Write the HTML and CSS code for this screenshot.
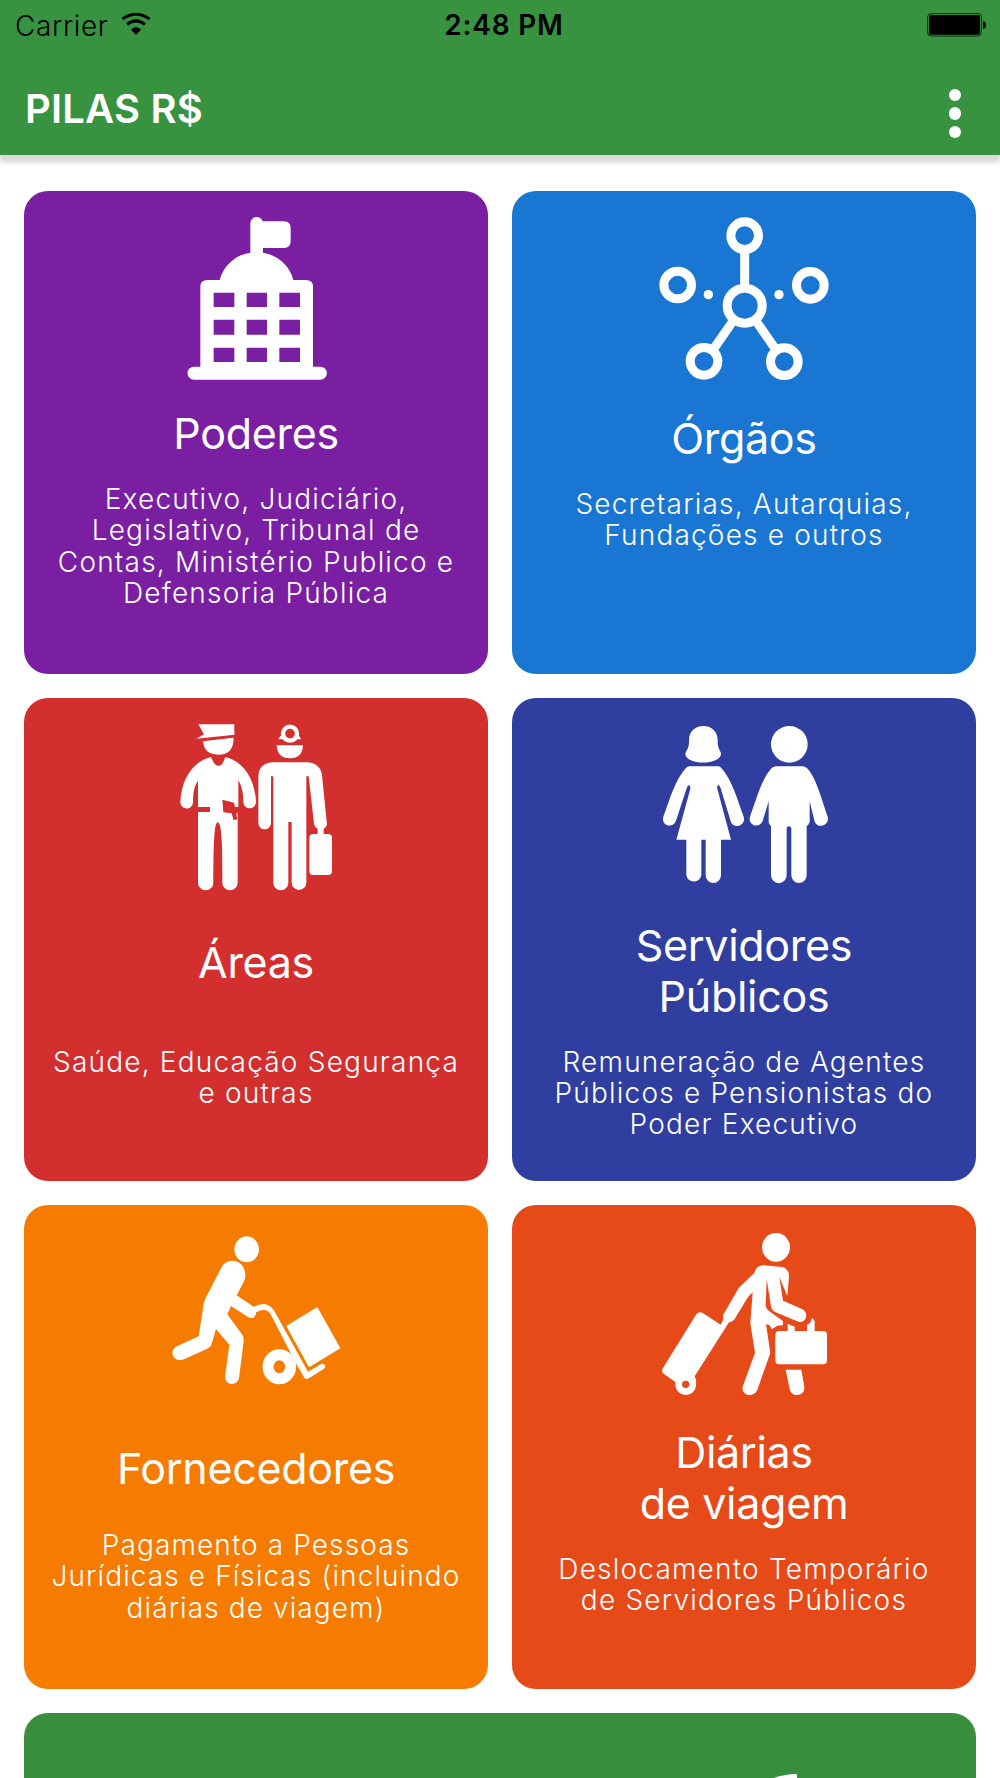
FILE: index.html
```html
<!DOCTYPE html>
<html lang="pt-BR">
<head>
  <meta charset="UTF-8">
  <meta name="viewport" content="width=device-width, initial-scale=1.0">
  <title>PILAS R$</title>
  <link rel="stylesheet" href="styles.css">
</head>
<body>
  <header class="header">
    <div class="status-bar">
      <div class="carrier">
        <span>Carrier</span>
        <svg class="wifi" viewBox="0 0 90 66">
          <path d="M4 18 Q45 -11 86 18" fill="none" stroke="#000" stroke-width="9"/>
          <path d="M18 34 Q45 13 72 34" fill="none" stroke="#000" stroke-width="9"/>
          <path d="M30 50 Q45 36 60 50 L45 65 Z"/>
        </svg>
      </div>
      <span class="time">2:48 PM</span>
      <svg class="battery" viewBox="0 0 180 72">
        <rect x="2" y="2" width="161" height="67" rx="10" fill="none" stroke="#0b3010" stroke-width="3"/>
        <rect x="6" y="6" width="153" height="59" rx="6"/>
        <path d="M168 24 Q177 26 177 36 Q177 46 168 48 Z"/>
      </svg>
    </div>
    <div class="toolbar">
      <h1>PILAS R$</h1>
      <button class="menu" aria-label="Menu"><i></i><i></i><i></i></button>
    </div>
  </header>

  <main class="grid">
    <a class="card poderes">
      <svg class="icon" viewBox="-57 0 630 600">
        <path fill-rule="evenodd" d="M241 71 A19 19 0 0 1 278 64 H342 Q362 64 362 84 V124 Q362 144 342 144 H279 V158 A112 112 0 0 1 370 240 H408 Q429 240 429 260 V500 H451 A19 19 0 0 1 451 539 H72 A19 19 0 0 1 72 500 H91 V260 Q91 240 112 240 H149 A112 112 0 0 1 241 158 Z
          M131 278 V321 H193 V278 Z M230 278 V321 H291 V278 Z M328 278 V321 H390 V278 Z
          M131 359 V404 H193 V359 Z M230 359 V404 H291 V359 Z M328 359 V404 H390 V359 Z
          M131 443 V486 H193 V443 Z M230 443 V486 H291 V443 Z M328 443 V486 H390 V443 Z"/>
      </svg>
      <h2>Poderes</h2>
      <p>Executivo, Judiciário,<br>Legislativo, Tribunal de<br>Contas, Ministério Publico e<br>Defensoria Pública</p>
    </a>

    <a class="card orgaos">
      <svg class="icon" viewBox="-3 0 630 600">
        <g fill="none" stroke="#fff" stroke-width="27">
          <circle cx="314" cy="107" r="41.5"/>
          <circle cx="113" cy="255" r="41.5"/>
          <circle cx="511" cy="256" r="41.5"/>
          <circle cx="192" cy="484" r="41.5"/>
          <circle cx="433" cy="485" r="41.5"/>
          <circle cx="314" cy="317" r="52.5"/>
          <path d="M314 155 V260 M277 366 L224 442 M350 366 L403 442"/>
        </g>
        <circle cx="205" cy="284" r="14"/>
        <circle cx="417" cy="284" r="14"/>
      </svg>
      <h2>Órgãos</h2>
      <p>Secretarias, Autarquias,<br>Fundações e outros</p>
    </a>

    <a class="card areas">
      <svg class="icon" viewBox="-27 21 630 600">
        <!-- policial -->
        <path d="M115 73 H223 V104 L109 116 L132 103 Z"/>
        <path d="M129 124 L221 113 Q221 164 175 164 Q132 164 129 124 Z"/>
        <path d="M153 171 C160 187 165 197 175 197 C186 197 190 187 196 171 C250 184 284 235 288 305 A19 19 0 0 1 250 307 C250 280 246 259 235 240 V321 H225 L222 308 L187 299 L190 337 L215 340 L221 361 L232 358 L229 343 L233 337 V548 A23 23 0 0 1 187 548 C187 470 188 367 173 367 C160 367 161 470 160 548 A23 23 0 0 1 114 548 V336 H150 V321 H114 V243 C102 259 99 280 99 308 A19 19 0 0 1 61 305 C65 235 99 184 153 171 Z"/>
        <!-- médico -->
        <circle cx="390" cy="101" r="21" fill="none" stroke="#fff" stroke-width="13"/>
        <path d="M363 106 L355 118 H372 Z M416 106 L424 118 H407 Z"/>
        <path d="M350 136 H429 Q427 175 390 175 Q352 175 350 136 Z"/>
        <path d="M338 187 H442 C470 188 485 207 486 226 L501 374 Q500 380 491 386 V402 H504 Q516 402 516 414 V513 Q516 525 504 525 H460 Q448 525 448 513 V414 Q448 402 460 402 H473 V386 Q463 380 462 371 L446 229 H439 V548 A22 22 0 0 1 395 548 V366 H385 V548 A22 22 0 0 1 340 548 V229 H333 V369 A19 19 0 0 1 295 369 V230 Q296 190 338 187 Z"/>
      </svg>
      <h2>Áreas</h2>
      <p>Saúde, Educação Segurança<br>e outras</p>
    </a>

    <a class="card servidores">
      <svg class="icon" viewBox="-3 21 630 600">
        <path d="M147 120 C147 64 233 64 233 120 C232 142 238 147 243 160 C246 197 133 197 136 160 C142 147 148 142 147 120 Z"/>
        <path d="M148 199 H234 Q240 199 246 206 C275 240 290 290 311 350 C319 374 284 390 273 367 L242 265 Q239 254 234 256 Q230 258 232 266 L273 419 H243 V526 A23 23 0 0 1 197 526 V419 H184 V526 A23 23 0 0 1 139 526 V419 H109 L151 266 Q152 258 148 256 Q143 254 140 265 L108 362 C98 388 62 376 70 350 C92 290 106 240 136 206 Q142 199 148 199 Z"/>
        <circle cx="448" cy="133" r="55"/>
        <path d="M408 199 H488 Q500 200 509 214 C532 247 543 293 563 350 C570 374 536 390 524 365 L509 304 V366 Q505 377 500 378 V526 A23 23 0 0 1 454 526 V385 Q453 379 447 379 Q440 379 440 386 V526 A23 23 0 0 1 393 526 V378 Q386 374 386 366 V304 L368 363 C357 388 323 376 330 350 C352 290 363 245 388 213 Q396 200 408 199 Z"/>
      </svg>
      <h2>Servidores<br>Públicos</h2>
      <p>Remuneração de Agentes<br>Públicos e Pensionistas do<br>Poder Executivo</p>
    </a>

    <a class="card fornecedores">
      <svg class="icon" viewBox="3 14 630 600">
        <ellipse cx="290" cy="120" rx="37" ry="39"/>
        <path d="M214 175 C222 160 234 154 248 154 C272 155 288 176 286 203 Q285 210 281 218 L260 258 L311 292 Q328 284 342 284 C356 285 366 294 373 305 L474 487 L514 464 C523 460 530 472 522 478 L474 508 Q468 512 463 505 L437 460 L362 315 Q354 302 341 302 Q330 302 319 309 Q315 328 301 326 Q296 325 289 320 L243 290 L232 315 L278 378 Q282 386 281 395 L267 506 C262 530 228 530 225 504 L238 406 L198 359 L184 407 Q181 415 170 419 L102 450 C70 462 53 424 82 410 L146 381 L161 285 Q163 273 168 264 Z"/>
        <ellipse cx="388" cy="472" rx="34" ry="36" fill="none" stroke="#fff" stroke-width="33"/>
        <path d="M409 350 L502 293 L571 417 L477 474 Z"/>
      </svg>
      <h2>Fornecedores</h2>
      <p>Pagamento a Pessoas<br>Jurídicas e Físicas (incluindo<br>diárias de viagem)</p>
    </a>

    <a class="card diarias">
      <svg class="icon" viewBox="-3 14 630 600">
        <ellipse cx="408" cy="114" rx="42" ry="43"/>
        <path d="M343 191 C347 175 358 168 372 168 L425 173 C440 175 448 188 447 202 L442 260 L418 203 L429 274 L486 299 C508 310 499 340 477 338 L405 308 Q395 303 393 291 L380 210 L377 290 Q380 300 388 306 L429 335 V348 L412 349 L395 360 L389 347 L378 345 L391 431 L352 541 C342 567 303 560 308 532 L345 430 L331 342 L338 249 L324 263 L284 329 Q278 338 266 340 L164 501 Q170 512 168 527 C166 567 107 567 106 525 V518 L71 493 Q62 486 69 476 L168 316 Q176 306 187 310 L242 346 L250 330 L249 318 L293 241 Q296 235 302 230 Z"/>
        <circle cx="137" cy="525" r="11" class="hole"/>
        <path d="M418 365 H443 V343 L464 352 V365 H501 V347 L510 341 L517 326 L524 335 V365 H549 Q561 365 561 377 V453 Q561 465 549 465 H418 Q406 465 406 453 V377 Q406 365 418 365 Z"/>
        <path d="M437 481 H484 L493 533 C496 562 453 566 449 538 Z"/>
      </svg>
      <h2>Diárias<br>de viagem</h2>
      <p>Deslocamento Temporário<br>de Servidores Públicos</p>
    </a>

    <a class="card wide">
      <svg class="wide-icon" viewBox="0 0 72 60">
        <path d="M0 13 Q30 1 72 0 V60 H0 Z"/>
      </svg>
    </a>
  </main>
</body>
</html>
```
FILE: styles.css
```css
* {
  box-sizing: border-box;
}
body {
  display: flex;
  flex-direction: column;
  margin: 0;
  height: 1778px;
  background: #fff;
  color: #fff;
  font-family: Inter, "Liberation Sans", sans-serif;
}
h1, h2, p {
  margin: 0;
}

.header {
  flex: none;
  position: relative;
  z-index: 1;
  height: 154.5px;
  background: #37933f;
  box-shadow: 0 8px 4px rgba(0, 0, 0, 0.14);
}
.status-bar {
  display: grid;
  grid-template-columns: 1fr auto 1fr;
  align-items: center;
  height: 50px;
  padding: 0 13px 0 15px;
  color: #000;
}
.carrier {
  display: flex;
  align-items: center;
  gap: 12px;
  font-size: 28px;
  font-weight: 300;
  letter-spacing: 0.6px;
}
.carrier span {
  padding-top: 1px;
}
.wifi {
  width: 30px;
  height: 22px;
  margin-bottom: 2px;
}
.time {
  padding-left: 6px;
  font-size: 28px;
  font-weight: 600;
  letter-spacing: 0.8px;
}
.battery {
  width: 60px;
  height: 24px;
  justify-self: end;
}
.toolbar {
  display: flex;
  align-items: center;
  justify-content: space-between;
  height: 104px;
  padding: 0 39px 0 25px;
}
h1 {
  padding-top: 14px;
  font-size: 40px;
  line-height: 50px;
  font-weight: 600;
  letter-spacing: 0.2px;
}
.menu {
  display: flex;
  flex-direction: column;
  gap: 6px;
  margin-top: 23px;
  padding: 0;
  border: none;
  background: none;
}
.menu i {
  width: 12.4px;
  height: 12.4px;
  border-radius: 50%;
  background: #fff;
}

.grid {
  flex: 1;
  min-height: 0;
  overflow: hidden;
  display: grid;
  grid-template-columns: 1fr 1fr;
  grid-auto-rows: 483.15px;
  gap: 24.15px;
  padding: 36.4px 24.15px 0;
}
.card {
  display: flex;
  flex-direction: column;
  align-items: center;
  padding-top: 9px;
  border-radius: 24px;
  text-align: center;
}
.icon {
  flex: none;
  width: 210px;
  height: 200px;
  fill: #fff;
}
.card h2 {
  margin-top: 13px;
  font-size: 43px;
  line-height: 50.6px;
  font-weight: 400;
  letter-spacing: -0.3px;
  white-space: nowrap;
}
.card p {
  margin-top: 25.5px;
  font-size: 28px;
  line-height: 31.3px;
  font-weight: 300;
  letter-spacing: 1.2px;
  white-space: nowrap;
}

.poderes { background: #7b1fa2; }
.orgaos { background: #1976d2; }
.areas { background: #d32f2f; }
.servidores { background: #303f9f; }
.fornecedores { background: #f57c00; }
.diarias { background: #e64a19; }
.hole { fill: #e64a19; }

.poderes h2 { margin-top: 8px; }
.areas h2 { margin-top: 30px; }
.areas p { margin-top: 59px; }
.fornecedores h2 { margin-top: 29px; }
.fornecedores p { margin-top: 36px; letter-spacing: 1.1px; }
.diarias h2 { margin-top: 12.5px; }

.wide {
  grid-column: 1 / 3;
  padding: 61px 178.5px 0 0;
  align-items: flex-end;
  background: #388e3c;
}
.wide-icon {
  width: 24px;
  height: 20px;
  fill: #fff;
}
```
